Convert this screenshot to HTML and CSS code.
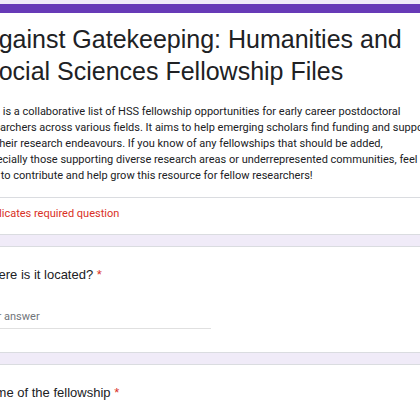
FILE: index.html
```html
<!DOCTYPE html>
<html lang="en">
<head>
  <meta charset="UTF-8">
  <meta name="viewport" content="width=device-width, initial-scale=1.0">
  <title>Against Gatekeeping</title>
  <link rel="stylesheet" href="styles.css">
</head>
<body>

  <div class="form">
    <div class="card header-card">
      <h1 class="form-title">Against Gatekeeping: Humanities and Social Sciences Fellowship Files</h1>
      <p class="form-desc">This is a collaborative list of HSS fellowship opportunities for early career postdoctoral<br>
        researchers across various fields. It aims to help emerging scholars find funding and support<br>
        for their research endeavours. If you know of any fellowships that should be added,<br>
        especially those supporting diverse research areas or underrepresented communities, feel<br>
        free to contribute and help grow this resource for fellow researchers!</p>
      <div class="required-note">* Indicates required question</div>
    </div>

    <div class="card question">
      <label class="question-title" for="location">Where is it located? <span class="req">*</span></label>
      <input class="answer" type="text" id="location" placeholder="Your answer">
    </div>

    <div class="card question">
      <label class="question-title" for="name">Name of the fellowship <span class="req">*</span></label>
      <input class="answer" type="text" id="name" placeholder="Your answer">
    </div>
  </div>

</body>
</html>
```

FILE: styles.css
```css
/* General Styles */
* {
  margin: 0;
  padding: 0;
  box-sizing: border-box;
}

body {
  background-color: #f0ebf8;
  font-family: 'Roboto', 'Liberation Sans', sans-serif;
  color: #202124;
  overflow: hidden;
}

.form {
  width: 512px;
  margin-left: -46px;
  padding-top: 4px;
  display: flex;
  flex-direction: column;
  gap: 11px;
}

.card {
  background-color: #ffffff;
  border: 1px solid #dadce0;
  border-radius: 8px;
}

/* Header card */
.header-card {
  border-top: 9px solid #673ab7;
}

.form-title {
  font-family: 'Liberation Sans', Arial, sans-serif;
  font-weight: normal;
  font-size: 25px;
  line-height: 32px;
  padding: 10px 24px 0 27px;
}

.form-desc {
  font-size: 11px;
  line-height: 16px;
  white-space: nowrap;
  padding: 17px 24px 13px 24px;
  border-bottom: 1px solid #dadce0;
}

.required-note {
  color: #d93025;
  font-size: 11px;
  line-height: 16px;
  padding: 8px 24px 12px;
}

/* Questions */
.question {
  display: flex;
  flex-direction: column;
  padding: 19px 24px 24px;
  height: 107px;
}

.question-title {
  font-family: 'Liberation Sans', Arial, sans-serif;
  font-size: 13px;
  line-height: 18px;
}

.req {
  color: #d93025;
}

.answer {
  width: 232px;
  margin-top: 24px;
  padding: 2px 0 5px;
  font-family: 'Roboto', sans-serif;
  font-size: 11px;
  border: none;
  border-bottom: 1px solid #e0e0e0;
  outline: none;
  background: transparent;
}

.answer::placeholder {
  color: #70757a;
}
```
